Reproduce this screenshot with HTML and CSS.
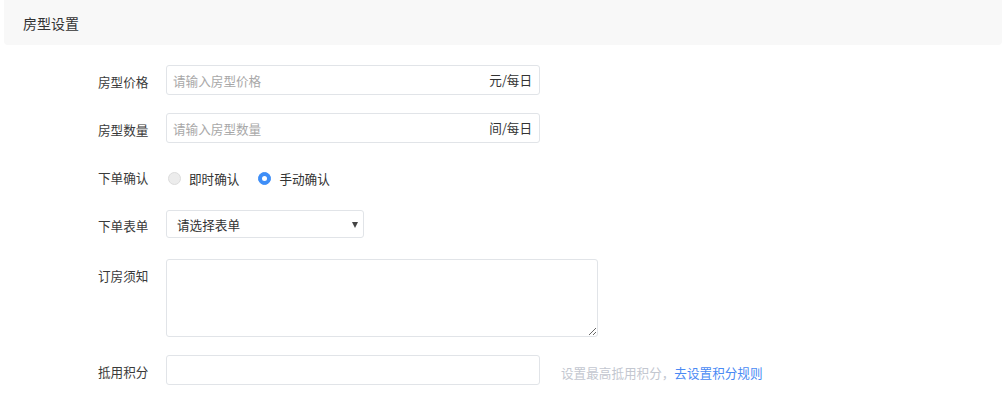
FILE: index.html
```html
<!DOCTYPE html>
<html lang="zh">
<head>
<meta charset="utf-8">
<title>房型设置</title>
<link rel="stylesheet" href="styles.css">
</head>
<body>
<div class="section-title">房型设置</div>
<form class="form">
  <div class="row">
    <label class="label">房型价格</label>
    <div class="input-wrap">
      <input class="input" type="text" placeholder="请输入房型价格">
      <span class="suffix">元/每日</span>
    </div>
  </div>
  <div class="row">
    <label class="label">房型数量</label>
    <div class="input-wrap">
      <input class="input" type="text" placeholder="请输入房型数量">
      <span class="suffix">间/每日</span>
    </div>
  </div>
  <div class="row row-radio">
    <label class="label">下单确认</label>
    <div class="radios">
      <span class="radio"><span class="dot"></span>即时确认</span>
      <span class="radio checked"><span class="dot"></span>手动确认</span>
    </div>
  </div>
  <div class="row row-select">
    <label class="label">下单表单</label>
    <div class="select-wrap">
      <select class="select"><option>请选择表单</option></select>
    </div>
  </div>
  <div class="row row-textarea">
    <label class="label">订房须知</label>
    <textarea class="textarea"></textarea>
  </div>
  <div class="row">
    <label class="label">抵用积分</label>
    <div class="input-wrap"><input class="input" type="text"></div>
    <span class="hint">设置最高抵用积分，<a class="link" href="#">去设置积分规则</a></span>
  </div>
</form>
</body>
</html>
```
FILE: styles.css
```css
* { box-sizing: border-box; }
html, body {
  margin: 0;
  padding: 0;
  background: #fff;
  font-family: "Noto Sans CJK SC", "Liberation Sans", sans-serif;
  color: #333;
}
.section-title {
  margin: 0 1px 0 4px;
  height: 45px;
  line-height: 47px;
  padding-left: 19px;
  background: #f8f8f8;
  border-radius: 0 0 4px 4px;
  font-size: 14px;
  color: #333;
}
.form {
  padding: 20px 0 0 98px;
  display: flex;
  flex-direction: column;
  gap: 18px;
}
.row {
  display: flex;
  align-items: center;
  font-size: 12.6px;
}
.label {
  width: 68px;
  flex: none;
  height: 30px;
  line-height: 26px;
  padding-top: 4px;
  color: #3a3a3a;
}
.input-wrap {
  position: relative;
  width: 374px;
  height: 30px;
}
.input {
  width: 100%;
  height: 100%;
  border: 1px solid #e1e4e8;
  border-radius: 3px;
  padding: 0 60px 0 6px;
  font: inherit;
  color: #333;
  outline: none;
}
.input::placeholder { color: #a8a8a8; }
.suffix {
  position: absolute;
  right: 8px;
  top: 0;
  line-height: 30px;
  color: #333;
}
.row-radio { height: 30px; }
.radios { display: flex; gap: 19px; padding-top: 4px; }
.radio {
  display: inline-flex;
  align-items: center;
  gap: 8px;
  color: #333;
}
.radio:first-child { margin-left: 2px; }
.dot {
  width: 13px;
  height: 13px;
  border-radius: 50%;
  background: #ececec;
  border: 1px solid #dcdcdc;
  position: relative;
}
.radio.checked .dot {
  background: #3e8ef7;
  border-color: #3e8ef7;
}
.radio.checked .dot::after {
  content: "";
  position: absolute;
  left: 3px;
  top: 3px;
  width: 5px;
  height: 5px;
  border-radius: 50%;
  background: #fff;
}
.select-wrap {
  position: relative;
  width: 198px;
  height: 28px;
}
.select {
  appearance: none;
  -webkit-appearance: none;
  width: 100%;
  height: 100%;
  border: 1px solid #e1e4e8;
  border-radius: 3px;
  background: #fff;
  padding: 0 20px 0 10px;
  font: inherit;
  color: #333;
  outline: none;
}
.select-wrap::after {
  content: "";
  position: absolute;
  right: 6px;
  top: 12px;
  border-left: 3px solid transparent;
  border-right: 3px solid transparent;
  border-top: 6px solid #444;
}
.row-textarea { align-items: flex-start; margin-top: 2px; }
.textarea {
  width: 432px;
  height: 78px;
  border: 1px solid #e1e4e8;
  border-radius: 3px;
  font: inherit;
  padding: 6px;
  outline: none;
}
.hint {
  margin-left: 21px;
  padding-top: 4px;
  color: #c3c7d0;
}
.link {
  color: #4a8af4;
  text-decoration: none;
}
```
